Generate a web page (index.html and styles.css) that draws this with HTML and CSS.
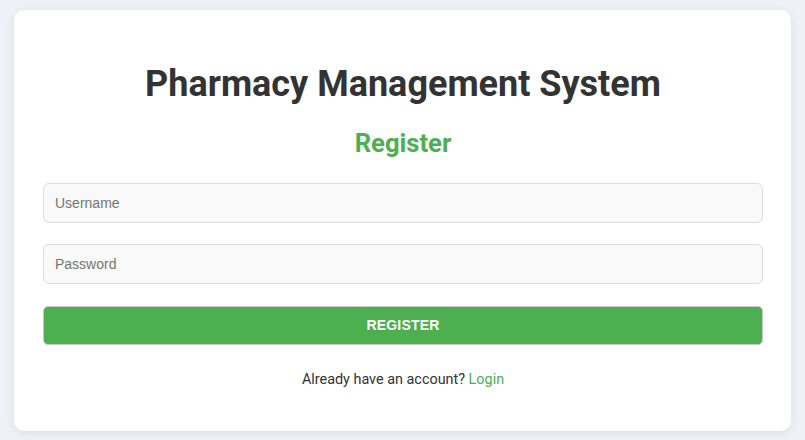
FILE: index.html
```html
<!DOCTYPE html>
<html lang="en">
<head>
<meta charset="utf-8">
<title>Register - Pharmacy Management System</title>
<link rel="stylesheet" href="styles.css">
</head>
<body>
  <div class="card">
    <h1 class="title">Pharmacy Management System</h1>
    <h2 class="subtitle">Register</h2>
    <form class="form">
      <input class="field" type="text" placeholder="Username">
      <input class="field" type="password" placeholder="Password">
      <button class="btn" type="button">Register</button>
    </form>
    <p class="footer">Already have an account? <a class="link" href="#">Login</a></p>
  </div>
</body>
</html>
```

FILE: styles.css
```css
html, body {
  margin: 0;
  padding: 0;
}
body {
  background: #eef1f5;
  padding: 10px 14px 9px;
  font-family: Roboto, "Liberation Sans", sans-serif;
  color: #333;
}
.card {
  background: #fff;
  border-radius: 10px;
  box-shadow: 0 2px 10px rgba(0, 0, 0, 0.08);
  padding: 53px 28px 43px 29px;
  display: flex;
  flex-direction: column;
}
.title {
  margin: 0;
  font-size: 36px;
  font-weight: 700;
  line-height: 42px;
  text-align: center;
  color: #333;
}
.subtitle {
  margin: 23px 0 0;
  font-size: 25.6px;
  font-weight: 700;
  line-height: 30px;
  text-align: center;
  color: #4caf50;
}
.form {
  margin-top: 25px;
  display: flex;
  flex-direction: column;
}
.field {
  box-sizing: border-box;
  height: 40px;
  margin: 0 0 21px;
  padding: 0 11px;
  border: 1px solid #ddd;
  border-radius: 6px;
  background: #f9f9f9;
  font-family: "Liberation Sans", Arial, sans-serif;
  font-size: 14px;
  color: #333;
  outline: none;
}
.field::placeholder {
  color: #757575;
}
.field + .field {
  margin-bottom: 22px;
}
.btn {
  box-sizing: border-box;
  height: 39px;
  padding: 0 0 1px;
  border: 1px solid #c9c9c9;
  border-radius: 5px;
  background: #4caf50;
  color: #fff;
  font-family: "Liberation Sans", Arial, sans-serif;
  font-size: 14px;
  font-weight: 700;
  text-transform: uppercase;
  letter-spacing: 0.2px;
  cursor: pointer;
}
.footer {
  margin: 27px 0 0;
  font-size: 14.4px;
  line-height: 16px;
  text-align: center;
  color: #333;
}
.link {
  color: #4caf50;
  text-decoration: none;
}
```
